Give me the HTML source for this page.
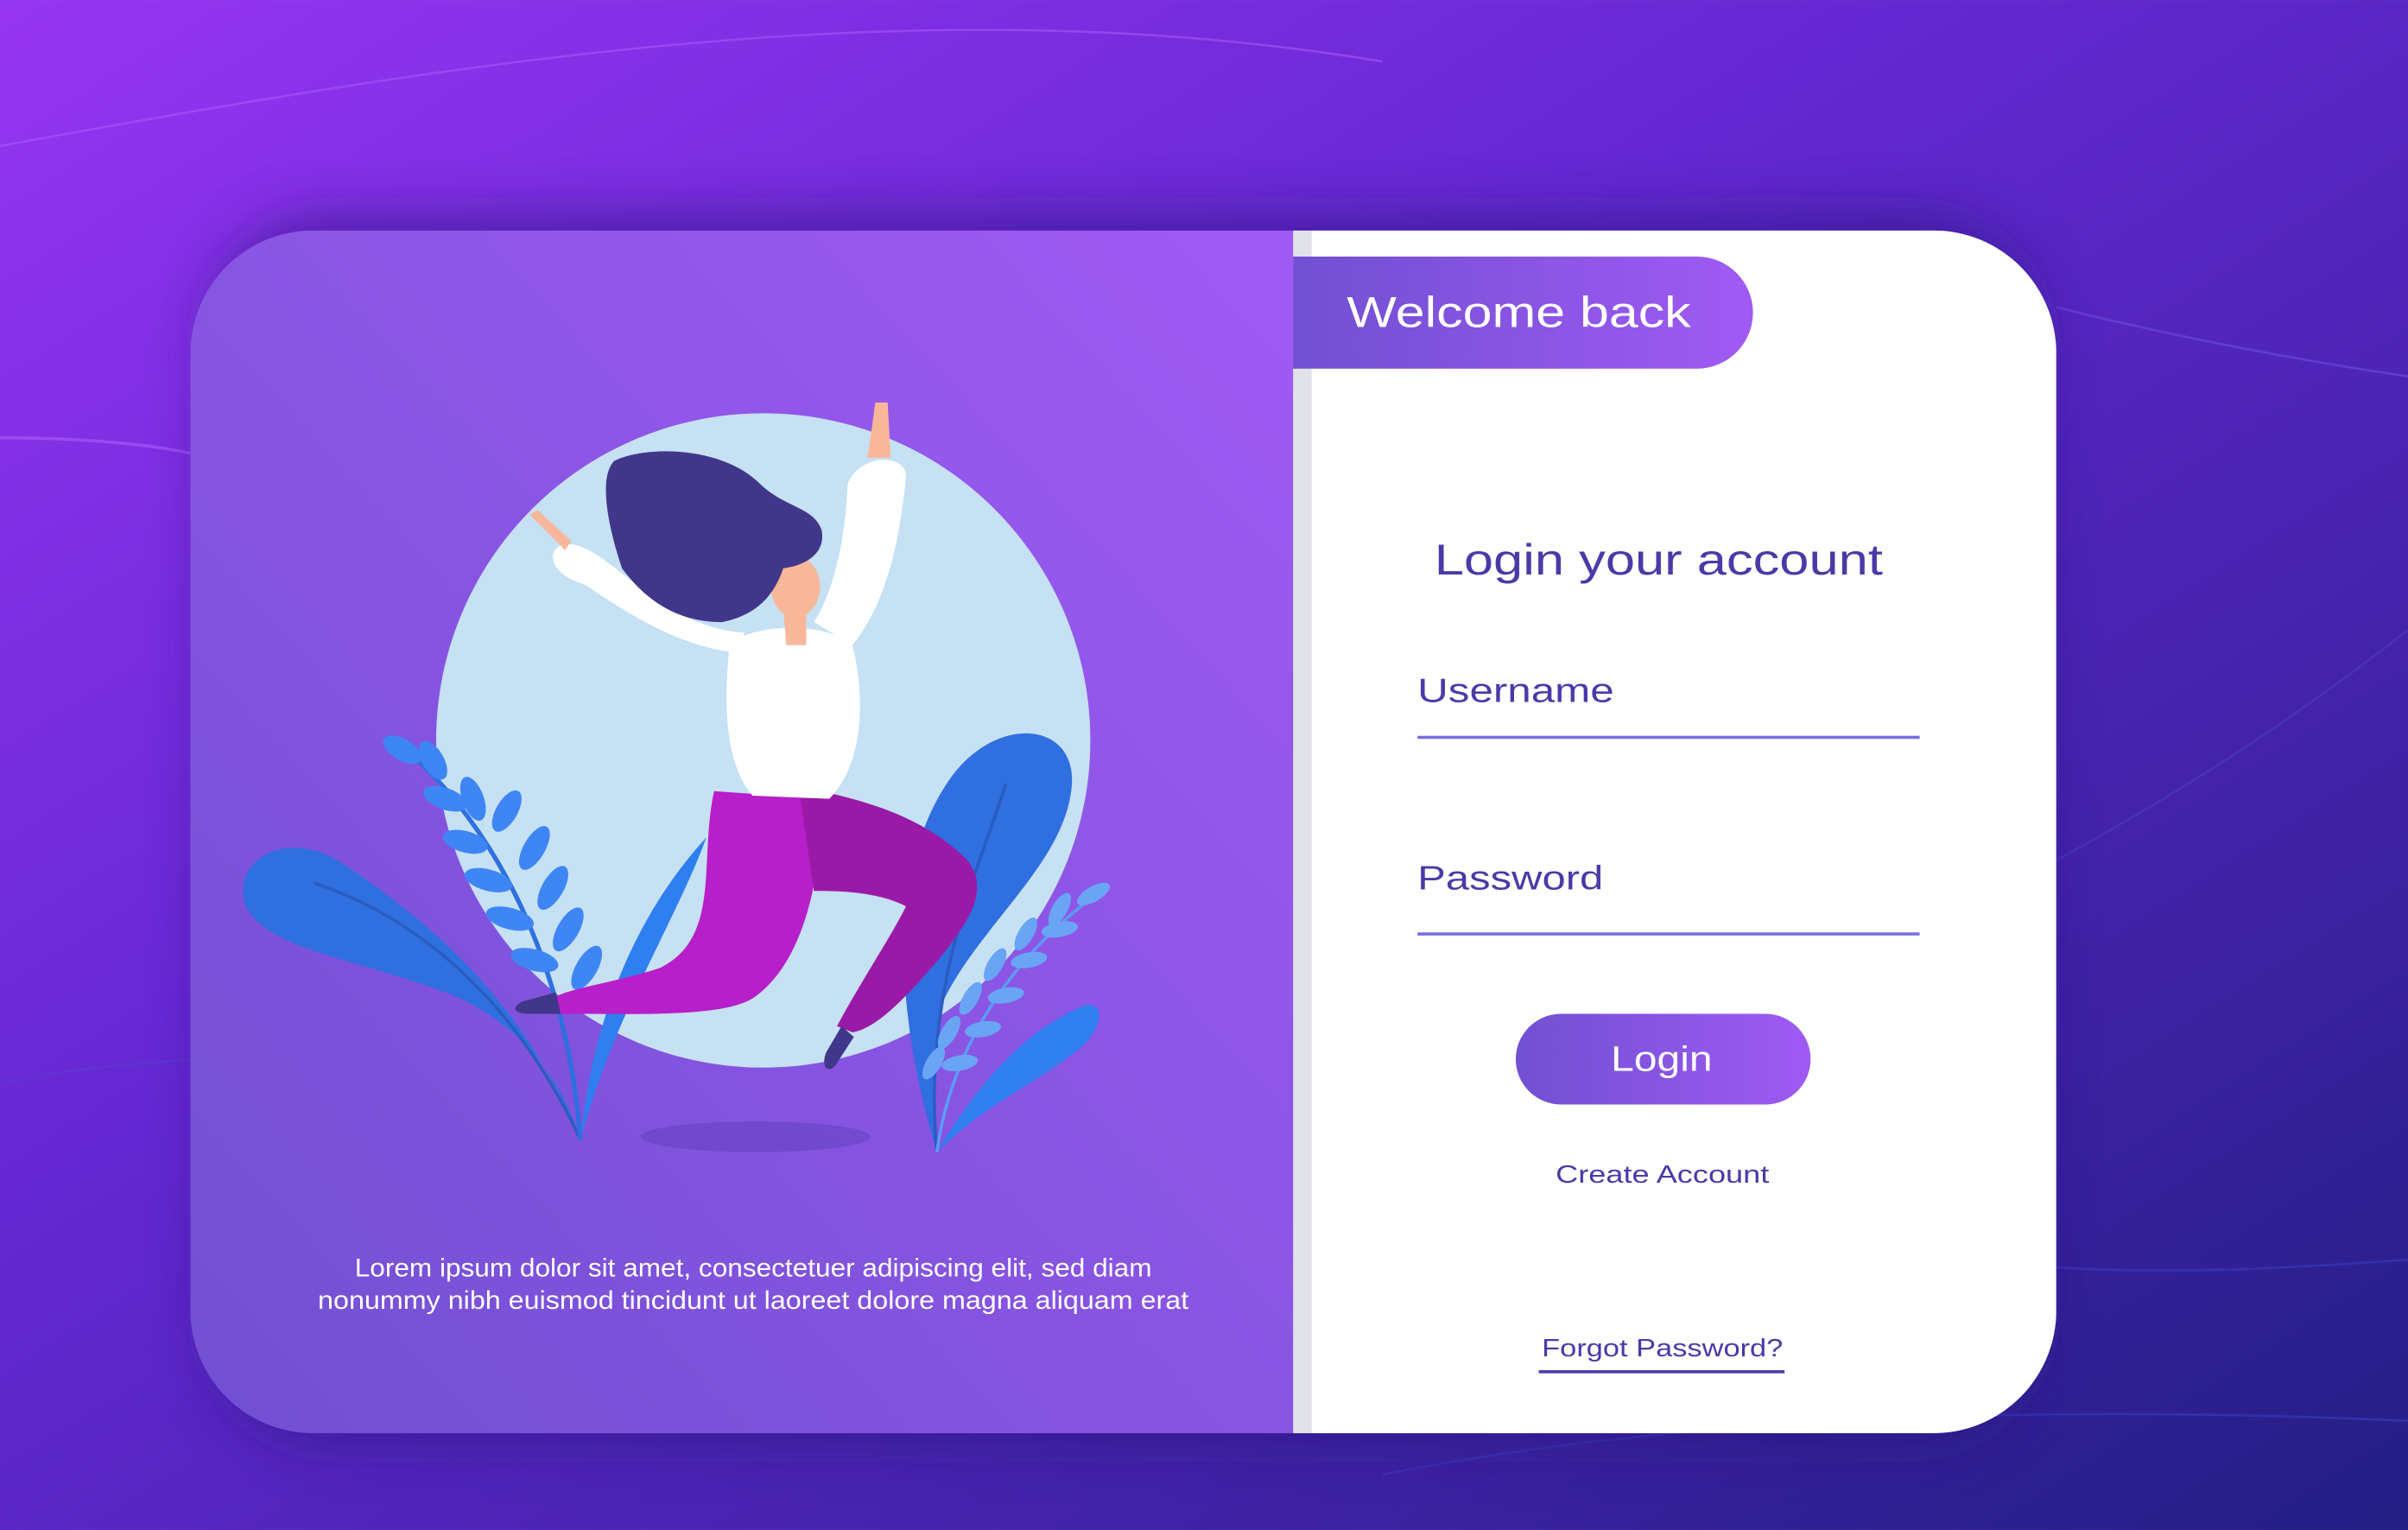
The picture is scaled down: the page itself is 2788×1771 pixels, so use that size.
<!DOCTYPE html>
<html><head><meta charset="utf-8"><style>
html,body{margin:0;padding:0;width:2788px;height:1771px;overflow:hidden}
svg{display:block}
text{font-family:"Liberation Sans",sans-serif}
</style></head><body>
<svg width="2788" height="1771" viewBox="0 0 1568 996" xmlns="http://www.w3.org/2000/svg">
<defs>
<linearGradient id="bg" x1="0" y1="0" x2="1" y2="1">
<stop offset="0" stop-color="#9635f2"/><stop offset="0.4" stop-color="#6428d2"/><stop offset="1" stop-color="#231e84"/>
</linearGradient>
<linearGradient id="lp" x1="1" y1="0" x2="0" y2="1">
<stop offset="0" stop-color="#a05af4"/><stop offset="1" stop-color="#7150d2"/>
</linearGradient>
<linearGradient id="pill" x1="0" y1="0" x2="1" y2="0">
<stop offset="0" stop-color="#7150d2"/><stop offset="1" stop-color="#a05af4"/>
</linearGradient>
<filter id="sh" x="-10%" y="-10%" width="120%" height="130%"><feGaussianBlur stdDeviation="18"/></filter>
<clipPath id="cardclip"><rect x="124" y="150" width="1215" height="783" rx="80"/></clipPath>
</defs>
<rect width="1568" height="996" fill="url(#bg)"/>
<path d="M0 95 C300 40 600 -10 900 40" stroke="#a855f7" stroke-width="1.5" fill="none" opacity="0.6"/>
<path d="M0 285 C60 285 100 290 124 295" stroke="#a855f7" stroke-width="2" fill="none" opacity="0.7"/>
<path d="M1339 200 C1420 220 1500 235 1568 245" stroke="#6a4fe0" stroke-width="1.5" fill="none" opacity="0.6"/>
<path d="M1339 560 C1450 500 1530 440 1568 410" stroke="#4b3cc0" stroke-width="1.5" fill="none" opacity="0.6"/>
<path d="M0 705 C50 695 90 692 124 690" stroke="#5a3ad0" stroke-width="1.5" fill="none" opacity="0.7"/>
<path d="M1339 825 C1420 830 1500 825 1568 820" stroke="#3a3cc0" stroke-width="1.5" fill="none" opacity="0.6"/>
<path d="M900 960 C1100 920 1350 915 1568 925" stroke="#3a3cc0" stroke-width="1.5" fill="none" opacity="0.6"/>
<rect x="134" y="140" width="1195" height="800" rx="80" fill="#2a1680" opacity="0.6" filter="url(#sh)"/>
<g clip-path="url(#cardclip)">
<rect x="124" y="150" width="718" height="783" fill="url(#lp)"/>
<rect x="842" y="150" width="12" height="783" fill="#e2e2ea"/>
<rect x="854" y="150" width="485" height="783" fill="#fff"/>
</g>
<!-- illustration -->
<ellipse cx="492" cy="740" rx="75" ry="10" fill="#6a45c8" opacity="0.7"/>
<circle cx="497" cy="482" r="213" fill="#c6e1f4"/>
<path d="M378 742 C340 650 280 600 220 560 C185 540 150 560 160 590 C175 620 240 625 300 650 C340 670 365 700 378 742Z" fill="#2f6fe0"/>
<path d="M378 742 C340 660 280 600 205 575" stroke="#2a5cc0" stroke-width="2" fill="none"/>
<path d="M378 742 C385 670 410 600 460 545 C440 600 400 660 378 742Z" fill="#2f7ff0"/>
<path d="M378 742 C370 640 330 540 255 480" stroke="#2f6fe0" stroke-width="3" fill="none"/>
<g fill="#3f86f5">
<ellipse cx="262" cy="488" rx="14" ry="7" transform="rotate(30 262 488)"/>
<ellipse cx="282" cy="495" rx="14" ry="7" transform="rotate(60 282 495)"/>
<ellipse cx="290" cy="520" rx="15" ry="7" transform="rotate(20 290 520)"/>
<ellipse cx="308" cy="520" rx="15" ry="7" transform="rotate(70 308 520)"/>
<ellipse cx="303" cy="548" rx="15" ry="7" transform="rotate(15 303 548)"/>
<ellipse cx="330" cy="528" rx="15" ry="7" transform="rotate(-60 330 528)"/>
<ellipse cx="318" cy="573" rx="16" ry="7" transform="rotate(15 318 573)"/>
<ellipse cx="348" cy="552" rx="16" ry="7" transform="rotate(-60 348 552)"/>
<ellipse cx="332" cy="598" rx="16" ry="7" transform="rotate(15 332 598)"/>
<ellipse cx="360" cy="578" rx="16" ry="7" transform="rotate(-60 360 578)"/>
<ellipse cx="348" cy="625" rx="16" ry="7" transform="rotate(15 348 625)"/>
<ellipse cx="370" cy="605" rx="16" ry="7" transform="rotate(-60 370 605)"/>
<ellipse cx="382" cy="630" rx="16" ry="7" transform="rotate(-60 382 630)"/>
</g>
<path d="M610 750 C580 650 580 560 620 505 C650 465 700 470 698 510 C695 560 640 600 615 650 C605 690 608 720 610 750Z" fill="#2f6fe0"/>
<path d="M610 750 C600 640 640 560 655 510" stroke="#2a5cc0" stroke-width="2" fill="none"/>
<path d="M610 750 C640 700 670 670 705 655 C720 650 720 670 700 685 C675 705 640 720 610 750Z" fill="#2f7ff0"/>
<path d="M610 750 C620 680 660 620 720 578" stroke="#5b9cf5" stroke-width="2" fill="none"/>
<g fill="#6aa4f5">
<ellipse cx="712" cy="582" rx="12" ry="5" transform="rotate(-30 712 582)"/>
<ellipse cx="690" cy="592" rx="12" ry="5" transform="rotate(-60 690 592)"/>
<ellipse cx="690" cy="605" rx="12" ry="5" transform="rotate(-10 690 605)"/>
<ellipse cx="668" cy="608" rx="12" ry="5" transform="rotate(-60 668 608)"/>
<ellipse cx="670" cy="625" rx="12" ry="5" transform="rotate(-10 670 625)"/>
<ellipse cx="648" cy="628" rx="12" ry="5" transform="rotate(-60 648 628)"/>
<ellipse cx="655" cy="648" rx="12" ry="5" transform="rotate(-10 655 648)"/>
<ellipse cx="632" cy="650" rx="12" ry="5" transform="rotate(-60 632 650)"/>
<ellipse cx="640" cy="670" rx="12" ry="5" transform="rotate(-10 640 670)"/>
<ellipse cx="618" cy="672" rx="12" ry="5" transform="rotate(-60 618 672)"/>
<ellipse cx="625" cy="692" rx="12" ry="5" transform="rotate(-10 625 692)"/>
<ellipse cx="608" cy="692" rx="12" ry="5" transform="rotate(-60 608 692)"/>
</g>
<path d="M465 515 C455 560 470 610 430 630 C400 640 370 643 360 650 L362 660 C420 660 470 662 490 650 C520 630 535 580 535 520Z" fill="#b71fca"/>
<path d="M520 512 C560 520 600 530 630 560 C645 580 630 600 615 620 C590 650 570 670 555 672 L545 668 C560 640 580 610 590 590 C570 580 545 580 530 580Z" fill="#9a1aa8"/>
<path d="M362 646 L340 652 C332 656 335 660 345 660 L365 660Z" fill="#41378a"/>
<path d="M548 668 L538 685 C534 695 540 700 545 692 L556 675Z" fill="#41378a"/>
<path d="M475 420 C470 470 475 500 490 518 L540 520 C560 500 565 460 555 420 C540 405 490 405 475 420Z" fill="#fff"/>
<path d="M555 420 C575 395 585 360 590 310 C590 295 560 295 552 315 C550 360 540 390 530 405Z" fill="#fff"/>
<path d="M480 425 C440 420 410 400 380 380 C360 375 355 360 365 355 C380 350 400 370 420 385 C440 400 460 410 485 412Z" fill="#fff"/>
<path d="M368 358 L345 335 L350 332 L372 352Z" fill="#f9b79a"/>
<path d="M565 298 L570 262 L578 262 L580 298Z" fill="#f9b79a"/>
<path d="M510 395 L512 420 L525 420 L525 395Z" fill="#f9b79a"/>
<ellipse cx="518" cy="382" rx="16" ry="20" fill="#f9b79a"/>
<path d="M400 300 C420 290 470 290 495 315 C510 330 530 330 535 345 C538 360 525 368 510 370 C505 385 495 400 470 405 C440 405 420 390 405 370 C395 340 390 310 400 300Z" fill="#41378a"/>
<text x="231" y="831" font-size="16.5" fill="#fff" textLength="519" lengthAdjust="spacingAndGlyphs">Lorem ipsum dolor sit amet, consectetuer adipiscing elit, sed diam</text>
<text x="207" y="852" font-size="16.5" fill="#fff" textLength="567" lengthAdjust="spacingAndGlyphs">nonummy nibh euismod tincidunt ut laoreet dolore magna aliquam erat</text>
<path d="M842 167 L1105 167 A36.5 36.5 0 0 1 1105 240 L842 240Z" fill="url(#pill)"/>
<text x="877" y="213" font-size="28" fill="#fff" textLength="224" lengthAdjust="spacingAndGlyphs">Welcome back</text>
<text x="934" y="374" font-size="28" fill="#4a3aa8" textLength="292" lengthAdjust="spacingAndGlyphs">Login your account</text>
<text x="923" y="457" font-size="22" fill="#4a3aa8" textLength="128" lengthAdjust="spacingAndGlyphs">Username</text>
<rect x="923" y="479" width="327" height="2" fill="#7a6ee0"/>
<text x="923" y="579" font-size="22" fill="#4a3aa8" textLength="121" lengthAdjust="spacingAndGlyphs">Password</text>
<rect x="923" y="607" width="327" height="2" fill="#7a6ee0"/>
<rect x="987" y="660" width="192" height="59" rx="29.5" fill="url(#pill)"/>
<text x="1049" y="697" font-size="23" fill="#fff" textLength="66" lengthAdjust="spacingAndGlyphs">Login</text>
<text x="1013" y="770" font-size="16" fill="#4a3aa8" textLength="139" lengthAdjust="spacingAndGlyphs">Create Account</text>
<text x="1004" y="883" font-size="16" fill="#4a3aa8" textLength="157" lengthAdjust="spacingAndGlyphs">Forgot Password?</text>
<rect x="1002" y="892" width="160" height="2" fill="#4a3aa8"/>
</svg>
</body></html>
